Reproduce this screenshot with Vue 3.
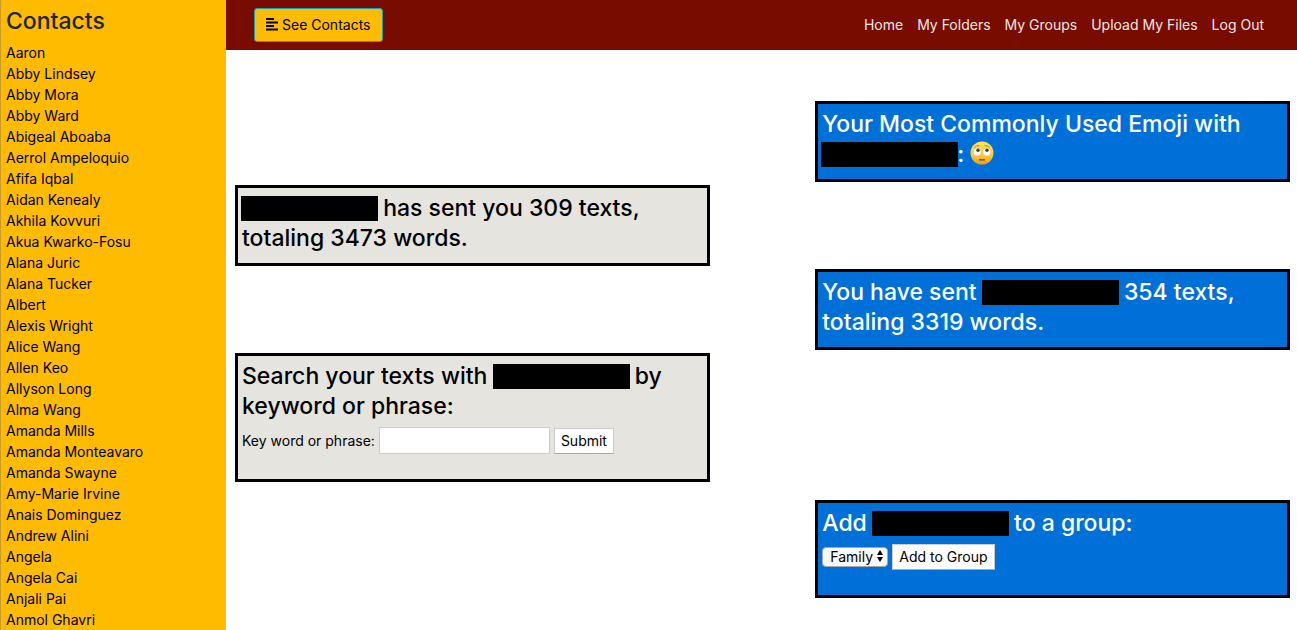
<script setup>
import { ref } from 'vue'

const contacts = [
  'Aaron', 'Abby Lindsey', 'Abby Mora', 'Abby Ward', 'Abigeal Aboaba',
  'Aerrol Ampeloquio', 'Afifa Iqbal', 'Aidan Kenealy', 'Akhila Kovvuri',
  'Akua Kwarko-Fosu', 'Alana Juric', 'Alana Tucker', 'Albert',
  'Alexis Wright', 'Alice Wang', 'Allen Keo', 'Allyson Long', 'Alma Wang',
  'Amanda Mills', 'Amanda Monteavaro', 'Amanda Swayne', 'Amy-Marie Irvine',
  'Anais Dominguez', 'Andrew Alini', 'Angela', 'Angela Cai', 'Anjali Pai',
  'Anmol Ghavri',
]
const links = ['Home', 'My Folders', 'My Groups', 'Upload My Files', 'Log Out']
const keyword = ref('')
const group = ref('Family')
const showContacts = ref(true)
</script>

<template>
  <div class="page">
    <aside v-if="showContacts" class="sidebar">
      <h3>Contacts</h3>
      <ul>
        <li v-for="name in contacts" :key="name"><a href="#">{{ name }}</a></li>
      </ul>
    </aside>

    <div class="content">
      <header class="navbar">
        <button type="button" class="toggle" @click="showContacts = !showContacts">
          <svg width="12" height="14" viewBox="0 0 12 14" aria-hidden="true">
            <path d="M0 1h8v2H0zM0 4.5h12v2H0zM0 8h8v2H0zM0 11.5h12v2H0z" fill="currentColor" />
          </svg>
          <span>See Contacts</span>
        </button>
        <nav>
          <a v-for="link in links" :key="link" href="#">{{ link }}</a>
        </nav>
      </header>

      <main>
        <section class="card sent">
          <h4>
            Your Most Commonly Used Emoji with <span class="redacted"></span>:
            <svg class="emoji" viewBox="0 0 24 24" role="img" aria-label="Face with rolling eyes">
              <defs>
                <linearGradient id="face" x1="0" y1="0" x2="0" y2="1">
                  <stop offset="0" stop-color="#ffe35c" />
                  <stop offset="0.6" stop-color="#fdc93a" />
                  <stop offset="1" stop-color="#ee9a1c" />
                </linearGradient>
              </defs>
              <circle cx="12" cy="12" r="11.5" fill="url(#face)" />
              <path d="M4.5 6.2Q6.5 4 9.2 4.5M19.5 6.2Q17.5 4 14.8 4.5" fill="none" stroke="#b8791a" stroke-width="0.8" stroke-linecap="round" />
              <circle cx="7.2" cy="11" r="4" fill="#fff" stroke="#d9a640" stroke-width="0.4" />
              <circle cx="16.8" cy="11" r="4" fill="#fff" stroke="#d9a640" stroke-width="0.4" />
              <circle cx="8" cy="9.2" r="1.7" fill="#4b3a32" />
              <circle cx="17" cy="9.2" r="1.7" fill="#4b3a32" />
              <path d="M9.5 18.8h5" stroke="#7a4513" stroke-width="1.2" stroke-linecap="round" />
            </svg>
          </h4>
        </section>

        <section class="card received">
          <h4><span class="redacted"></span> has sent you 309 texts, totaling 3473 words.</h4>
        </section>

        <section class="card sent">
          <h4>You have sent <span class="redacted"></span> 354 texts, totaling 3319 words.</h4>
        </section>

        <section class="card received">
          <h4>Search your texts with <span class="redacted"></span> by keyword or phrase:</h4>
          <form @submit.prevent>
            <label for="keyword">Key word or phrase:</label>
            <input id="keyword" v-model="keyword" type="text" />
            <button type="submit" class="action">Submit</button>
          </form>
        </section>

        <section class="card sent last">
          <h4>Add <span class="redacted"></span> to a group:</h4>
          <form @submit.prevent>
            <div class="picker">
              <select v-model="group" aria-label="Group">
                <option>Family</option>
              </select>
              <svg width="6" height="12" viewBox="0 0 6 12" aria-hidden="true">
                <path d="M3 0l3 5H0zM3 12l3-5H0z" fill="#000" />
              </svg>
            </div>
            <button type="submit" class="action">Add to Group</button>
          </form>
        </section>
      </main>
    </div>
  </div>
</template>

<style>
body {
  margin: 0;
  background: #fff;
}
</style>

<style scoped>
.page {
  display: flex;
  height: 100vh;
  overflow: hidden;
  font: 14px/21px Inter, "Liberation Sans", sans-serif;
  color: #000;
}
.page * {
  box-sizing: border-box;
}
a {
  color: inherit;
  text-decoration: none;
}
button, input, select {
  font: inherit;
  color: inherit;
  margin: 0;
}
h3, h4 {
  font-size: 23px;
  line-height: 30px;
  font-weight: 500;
}
.sidebar {
  flex: 0 0 226px;
  padding: 6px 5px;
  overflow: hidden;
  background: #ffbb00;
  border-left: 1px solid #c79a2a;
}
.sidebar h3 {
  margin: 0 0 6px;
  color: #212529;
}
.sidebar ul {
  margin: 0;
  padding: 0;
  list-style: none;
}
.content {
  flex: 1;
  min-width: 0;
}
.navbar {
  display: flex;
  align-items: center;
  justify-content: space-between;
  padding: 8px 33px 8px 28px;
  background: #780c00;
}
.toggle {
  display: flex;
  align-items: center;
  gap: 4px;
  height: 34px;
  padding: 0 12px 2px 11px;
  background: #ffbb00;
  border: 1px solid #17a2b8;
  border-radius: 3px;
}
nav {
  display: flex;
  gap: 14px;
  padding-bottom: 2px;
  color: #f0e6e5;
}
main {
  display: flex;
  flex-direction: column;
  gap: 3px;
  padding: 51px 7px 0 9px;
}
.card {
  width: 45%;
  padding: 5px 4px 10px;
  border: 3px solid #000;
}
.card h4 {
  margin: 0;
}
.sent {
  align-self: flex-end;
  background: #0070d9;
  color: #fff;
}
.received {
  background: #e5e4df;
}
.last {
  margin-top: 15px;
}
.redacted {
  display: inline-block;
  width: 137px;
  height: 25px;
  margin: 0 -1px;
  vertical-align: -5px;
  background: #000;
}
.emoji {
  display: inline-block;
  width: 24px;
  height: 24px;
  vertical-align: -3px;
}
form {
  display: flex;
  align-items: center;
  gap: 4px;
  margin: 6px 0 15px;
}
input {
  width: 171px;
  height: 27px;
  padding: 0 4px;
  background: #fff;
  border: 1px solid #ccc;
}
.action {
  height: 26px;
  padding: 0 6px 1px;
  color: #000;
  background: #fff;
  border: 1px solid #ccc;
  border-bottom-color: #aaa;
}
.picker {
  position: relative;
  height: 20px;
}
.picker select {
  display: block;
  width: 66px;
  height: 20px;
  padding: 0 14px 0 7px;
  line-height: 18px;
  color: #000;
  background: #f8f8f8;
  border: 1px solid #a6a6a6;
  border-radius: 4px;
  appearance: none;
}
.picker svg {
  position: absolute;
  top: 3px;
  right: 5px;
  pointer-events: none;
}
</style>
